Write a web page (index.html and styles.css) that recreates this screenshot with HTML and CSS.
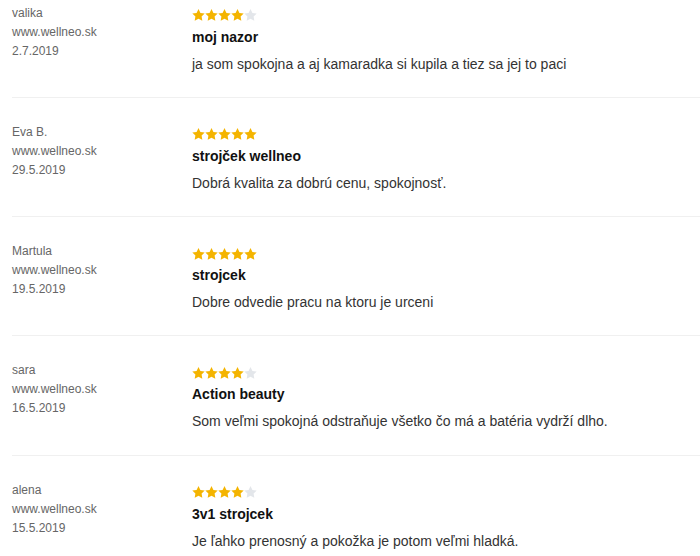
FILE: index.html
```html
<!DOCTYPE html>
<html lang="sk">
<head>
    <meta charset="UTF-8">
    <title>Hodnotenia</title>
    <link rel="stylesheet" href="styles.css">
</head>
<body>
    <svg width="0" height="0" class="defs">
        <defs>
            <polygon id="star" points="10,0 12.94,6.04 19.51,6.91 14.76,11.55 15.88,18.09 10,15 4.12,18.09 5.24,11.55 0.49,6.91 7.06,6.04"/>
        </defs>
    </svg>

    <div class="reviews">
        <div class="review">
            <div class="author">
                <div>valika</div>
                <div>www.wellneo.sk</div>
                <div>2.7.2019</div>
            </div>
            <div class="body">
                <div class="stars">
                    <svg viewBox="0 0 20 19"><use href="#star"/></svg><svg viewBox="0 0 20 19"><use href="#star"/></svg><svg viewBox="0 0 20 19"><use href="#star"/></svg><svg viewBox="0 0 20 19"><use href="#star"/></svg><svg viewBox="0 0 20 19" class="off"><use href="#star"/></svg>
                </div>
                <div class="title">moj nazor</div>
                <div class="text">ja som spokojna a aj kamaradka si kupila a tiez sa jej to paci</div>
            </div>
        </div>

        <div class="review">
            <div class="author">
                <div>Eva B.</div>
                <div>www.wellneo.sk</div>
                <div>29.5.2019</div>
            </div>
            <div class="body">
                <div class="stars">
                    <svg viewBox="0 0 20 19"><use href="#star"/></svg><svg viewBox="0 0 20 19"><use href="#star"/></svg><svg viewBox="0 0 20 19"><use href="#star"/></svg><svg viewBox="0 0 20 19"><use href="#star"/></svg><svg viewBox="0 0 20 19"><use href="#star"/></svg>
                </div>
                <div class="title">strojček wellneo</div>
                <div class="text">Dobrá kvalita za dobrú cenu, spokojnosť.</div>
            </div>
        </div>

        <div class="review">
            <div class="author">
                <div>Martula</div>
                <div>www.wellneo.sk</div>
                <div>19.5.2019</div>
            </div>
            <div class="body">
                <div class="stars">
                    <svg viewBox="0 0 20 19"><use href="#star"/></svg><svg viewBox="0 0 20 19"><use href="#star"/></svg><svg viewBox="0 0 20 19"><use href="#star"/></svg><svg viewBox="0 0 20 19"><use href="#star"/></svg><svg viewBox="0 0 20 19"><use href="#star"/></svg>
                </div>
                <div class="title">strojcek</div>
                <div class="text">Dobre odvedie pracu na ktoru je urceni</div>
            </div>
        </div>

        <div class="review">
            <div class="author">
                <div>sara</div>
                <div>www.wellneo.sk</div>
                <div>16.5.2019</div>
            </div>
            <div class="body">
                <div class="stars">
                    <svg viewBox="0 0 20 19"><use href="#star"/></svg><svg viewBox="0 0 20 19"><use href="#star"/></svg><svg viewBox="0 0 20 19"><use href="#star"/></svg><svg viewBox="0 0 20 19"><use href="#star"/></svg><svg viewBox="0 0 20 19" class="off"><use href="#star"/></svg>
                </div>
                <div class="title">Action beauty</div>
                <div class="text">Som veľmi spokojná odstraňuje všetko čo má a batéria vydrží dlho.</div>
            </div>
        </div>

        <div class="review">
            <div class="author">
                <div>alena</div>
                <div>www.wellneo.sk</div>
                <div>15.5.2019</div>
            </div>
            <div class="body">
                <div class="stars">
                    <svg viewBox="0 0 20 19"><use href="#star"/></svg><svg viewBox="0 0 20 19"><use href="#star"/></svg><svg viewBox="0 0 20 19"><use href="#star"/></svg><svg viewBox="0 0 20 19"><use href="#star"/></svg><svg viewBox="0 0 20 19" class="off"><use href="#star"/></svg>
                </div>
                <div class="title">3v1 strojcek</div>
                <div class="text">Je ľahko prenosný a pokožka je potom veľmi hladká.</div>
            </div>
        </div>
    </div>
</body>
</html>
```

FILE: styles.css
```css
body {
    margin: 0;
    background: #fff;
    font-family: "Liberation Sans", Arial, sans-serif;
    overflow: hidden;
}
.defs {
    position: absolute;
}
.reviews {
    margin: -21.5px 0 0 12px;
}
.review {
    display: grid;
    grid-template-columns: 180px 1fr;
    height: 119.33px;
    box-sizing: border-box;
    padding-top: 25px;
    border-bottom: 1px solid #f0f0f0;
}
.author {
    font-size: 12px;
    line-height: 19px;
    color: #666;
}
.stars {
    display: flex;
    padding-top: 5.5px;
    height: 12.5px;
}
.stars svg {
    width: 13px;
    height: 12.4px;
    fill: #f4b400;
}
.stars svg.off {
    fill: #e3e6ea;
}
.title {
    margin-top: 5px;
    font-size: 14px;
    line-height: 20px;
    font-weight: bold;
    color: #111;
}
.text {
    margin-top: 7px;
    font-size: 14px;
    line-height: 20px;
    color: #333;
}
```
